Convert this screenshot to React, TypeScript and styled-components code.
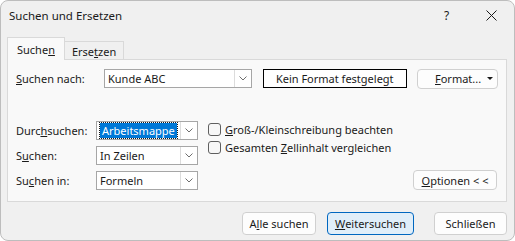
import React from "react";
import styled, { createGlobalStyle } from "styled-components";

const GlobalStyle = createGlobalStyle`
  html, body {
    margin: 0;
    padding: 0;
    background: #ffffff;
  }
  body {
    font-family: "Noto Sans", "Open Sans", sans-serif;
    font-size: 11px;
    color: #1a1a1a;
  }
`;

const Window = styled.div`
  box-sizing: border-box;
  width: 515px;
  height: 241px;
  background: #f0f0f0;
  border: 1px solid #bdbdbd;
  border-radius: 8px;
  display: flex;
  flex-direction: column;
  overflow: hidden;
`;

const TitleBar = styled.div`
  height: 29px;
  display: flex;
  align-items: center;
  padding-left: 8px;
`;

const Title = styled.div`
  flex: 1;
  font-size: 11.5px;
`;

const TitleButton = styled.div`
  width: 45px;
  height: 29px;
  display: flex;
  align-items: center;
  justify-content: center;
  font-size: 12px;
`;

const Tabs = styled.div`
  display: flex;
  align-items: flex-end;
  padding-left: 6px;
  margin-top: 7px;
  height: 22px;
`;

const Tab = styled.div<{ $active?: boolean }>`
  box-sizing: border-box;
  height: ${p => (p.$active ? "23px" : "18px")};
  padding: 0 ${p => (p.$active ? "9px" : "7px")};
  display: flex;
  align-items: center;
  border: 1px solid #d9d9d9;
  border-bottom: none;
  background: ${p => (p.$active ? "#f9f9f9" : "#f0f0f0")};
  margin-bottom: ${p => (p.$active ? "-1px" : "0")};
  margin-left: ${p => (p.$active ? "0" : "-1px")};
  position: relative;
  z-index: ${p => (p.$active ? 1 : 0)};
  padding-top: ${p => (p.$active ? "0" : "1px")};
`;

const Panel = styled.div`
  box-sizing: border-box;
  margin: 0 7px 0 6px;
  height: 143px;
  background: #f9f9f9;
  border: 1px solid #d9d9d9;
  padding: 9px 8px 0 8px;
  display: flex;
  flex-direction: column;
`;

const TopRow = styled.div`
  display: flex;
  align-items: center;
  height: 19px;
`;

const Label = styled.div<{ $width: number }>`
  width: ${p => p.$width}px;
  flex-shrink: 0;
`;

const Combo = styled.div<{ $width: number }>`
  box-sizing: border-box;
  width: ${p => p.$width}px;
  height: 19px;
  background: #ffffff;
  border: 1px solid #a6a6a6;
  display: flex;
  align-items: stretch;
`;

const ComboText = styled.div`
  flex: 1;
  display: flex;
  align-items: center;
  padding-left: 3px;
  white-space: nowrap;
`;

const Selected = styled.span`
  background: #0078d7;
  color: #ffffff;
  padding: 0 2px;
  outline: 1px dotted #1a1a1a;
  line-height: 15px;
`;

const ComboArrow = styled.div`
  width: 16px;
  border-left: 1px solid #dcdcdc;
  display: flex;
  align-items: center;
  justify-content: center;
`;

const FormatBox = styled.div`
  box-sizing: border-box;
  width: 145px;
  height: 19px;
  margin-left: 11px;
  border: 1px solid #000000;
  background: #ffffff;
  display: flex;
  align-items: center;
  justify-content: center;
`;

const Button = styled.div<{ $width: number; $primary?: boolean }>`
  box-sizing: border-box;
  width: ${p => p.$width}px;
  height: ${p => (p.$primary !== undefined ? "23px" : "20px")};
  border: 1px solid ${p => (p.$primary ? "#0067c0" : "#d0d0d0")};
  border-radius: 4px;
  background: ${p => (p.$primary ? "#e0eef9" : "#fdfdfd")};
  display: flex;
  align-items: center;
  justify-content: center;
  flex-shrink: 0;
`;

const FormatButton = styled(Button)`
  margin-left: 10px;
  justify-content: flex-start;
  padding-left: 17px;
  padding-right: 4px;
`;

const Caret = styled.span`
  margin-left: auto;
  display: flex;
`;

const Lower = styled.div`
  display: flex;
  margin-top: 33px;
`;

const Fields = styled.div`
  display: grid;
  grid-template-columns: 80px 102px;
  grid-auto-rows: 19px;
  row-gap: 6px;
  align-items: center;
`;

const Checks = styled.div`
  display: flex;
  flex-direction: column;
  margin-left: 10px;
  margin-top: -1px;
`;

const CheckRow = styled.div`
  display: flex;
  align-items: center;
  height: 18px;
`;

const CheckBox = styled.div`
  box-sizing: border-box;
  width: 13px;
  height: 13px;
  border: 1px solid #5f5f5f;
  border-radius: 3px;
  background: #f7f7f7;
  margin-right: 4px;
`;

const OptionsArea = styled.div`
  flex: 1;
  display: flex;
  justify-content: flex-end;
  align-items: flex-end;
  padding-right: 1px;
`;

const Footer = styled.div`
  display: flex;
  justify-content: flex-end;
  align-items: center;
  padding: 10px 7px 0 0;
`;

const Gap = styled.div<{ $w: number }>`
  width: ${p => p.$w}px;
`;

const Chevron = () => (
  <svg width="8" height="5" viewBox="0 0 8 5">
    <path d="M0.5 0.5 L4 4 L7.5 0.5" fill="none" stroke="#6e6e6e" strokeWidth="1" />
  </svg>
);

const Close = () => (
  <svg width="11" height="11" viewBox="0 0 11 11">
    <path d="M0.5 0.5 L10.5 10.5 M10.5 0.5 L0.5 10.5" stroke="#1a1a1a" strokeWidth="1" />
  </svg>
);

const DropCaret = () => (
  <svg width="6" height="3" viewBox="0 0 6 3">
    <path d="M0 0 L6 0 L3 3 Z" fill="#1a1a1a" />
  </svg>
);

const Select = ({ width, children }: { width: number; children: React.ReactNode }) => (
  <Combo $width={width}>
    <ComboText>{children}</ComboText>
    <ComboArrow>
      <Chevron />
    </ComboArrow>
  </Combo>
);

export default function App() {
  return (
    <>
      <GlobalStyle />
      <Window>
        <TitleBar>
          <Title>Suchen und Ersetzen</Title>
          <TitleButton>?</TitleButton>
          <TitleButton>
            <Close />
          </TitleButton>
        </TitleBar>
        <Tabs>
          <Tab $active>
            Suche<u>n</u>
          </Tab>
          <Tab>
            Erse<u>t</u>zen
          </Tab>
        </Tabs>
        <Panel>
          <TopRow>
            <Label $width={88}>
              <u>S</u>uchen nach:
            </Label>
            <Select width={148}>Kunde ABC</Select>
            <FormatBox>Kein Format festgelegt</FormatBox>
            <FormatButton $width={81}>
              <u>F</u>ormat...
              <Caret>
                <DropCaret />
              </Caret>
            </FormatButton>
          </TopRow>
          <Lower>
            <Fields>
              <Label $width={80}>
                Durc<u>h</u>suchen:
              </Label>
              <Select width={102}>
                <Selected>Arbeitsmappe</Selected>
              </Select>
              <Label $width={80}>
                S<u>u</u>chen:
              </Label>
              <Select width={102}>In Zeilen</Select>
              <Label $width={80}>
                Su<u>c</u>hen in:
              </Label>
              <Select width={102}>Formeln</Select>
            </Fields>
            <Checks>
              <CheckRow>
                <CheckBox />
                <span>
                  <u>G</u>roß-/Kleinschreibung beachten
                </span>
              </CheckRow>
              <CheckRow>
                <CheckBox />
                <span>
                  Gesamten <u>Z</u>ellinhalt vergleichen
                </span>
              </CheckRow>
            </Checks>
            <OptionsArea>
              <Button $width={84}>
                <u>O</u>ptionen &lt; &lt;
              </Button>
            </OptionsArea>
          </Lower>
        </Panel>
        <Footer>
          <Button $width={74} $primary={false}>
            A<u>l</u>le suchen
          </Button>
          <Gap $w={11} />
          <Button $width={87} $primary>
            <u>W</u>eitersuchen
          </Button>
          <Gap $w={20} />
          <Button $width={73} $primary={false}>
            Schließen
          </Button>
        </Footer>
      </Window>
    </>
  );
}
